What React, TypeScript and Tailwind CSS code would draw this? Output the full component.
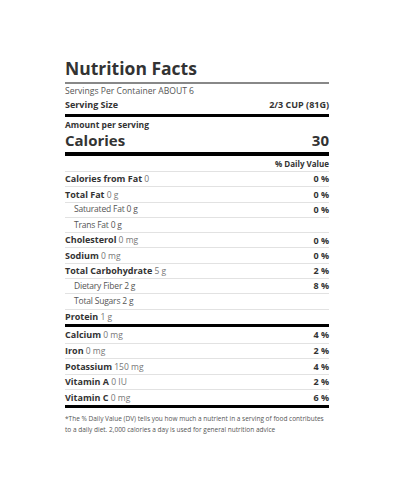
import React from "react";

interface RowProps {
  label: string;
  amount?: string;
  dv?: string;
  sub?: boolean;
  first?: boolean;
  height: string;
}

const Row: React.FC<RowProps> = ({ label, amount, dv, sub, first, height }) => {
  return (
    <div
      className={
        "flex items-center justify-between " +
        height +
        (first ? "" : " border-t border-[#e2e2e2]")
      }
    >
      <p className={sub ? "pl-[9px] text-[8.5px] tracking-[-0.2px] text-[#555]" : "text-[9px] font-bold text-[#333]"}>
        {label}
        {amount && <span className="text-[8.5px] font-normal text-[#777]"> {amount}</span>}
      </p>
      {dv && <p className="text-[9px] font-bold text-[#333]">{dv}</p>}
    </div>
  );
};

const nutrients = [
  { label: "Calories from Fat", amount: "0", dv: "0 %" },
  { label: "Total Fat", amount: "0 g", dv: "0 %" },
  { label: "Saturated Fat 0 g", dv: "0 %", sub: true },
  { label: "Trans Fat 0 g", sub: true },
  { label: "Cholesterol", amount: "0 mg", dv: "0 %" },
  { label: "Sodium", amount: "0 mg", dv: "0 %" },
  { label: "Total Carbohydrate", amount: "5 g", dv: "2 %" },
  { label: "Dietary Fiber 2 g", dv: "8 %", sub: true },
  { label: "Total Sugars 2 g", sub: true },
  { label: "Protein", amount: "1 g" },
];

const minerals = [
  { label: "Calcium", amount: "0 mg", dv: "4 %" },
  { label: "Iron", amount: "0 mg", dv: "2 %" },
  { label: "Potassium", amount: "150 mg", dv: "4 %" },
  { label: "Vitamin A", amount: "0 IU", dv: "2 %" },
  { label: "Vitamin C", amount: "0 mg", dv: "6 %" },
];

export default function App() {
  return (
    <div className="w-[400px] h-[480px] bg-white font-['Open_Sans',sans-serif] text-[#333]">
      <div className="ml-[65px] w-[264px] pt-[55px]">
        <h1 className="flex items-center h-[27px] text-[17.5px] font-bold leading-none text-[#333]">
          Nutrition Facts
        </h1>
        <div className="h-[2px] bg-[#888]"></div>

        <div className="flex items-center h-[15px] text-[8.6px] text-[#555]">
          Servings Per Container ABOUT 6
        </div>
        <div className="flex items-center justify-between h-[12px] mb-[3px] text-[9px] font-bold">
          <span>Serving Size</span>
          <span>2/3 CUP (81G)</span>
        </div>
        <div className="h-[3px] bg-black"></div>

        <div className="flex items-center h-[16px] text-[8.5px] font-bold">
          Amount per serving
        </div>
        <div className="flex items-center justify-between h-[14px] mb-[5px] text-[15px] font-bold leading-none">
          <span>Calories</span>
          <span>30</span>
        </div>
        <div className="h-[4px] bg-black"></div>

        <div className="flex items-center justify-end h-[15px] text-[8px] font-bold">
          % Daily Value
        </div>
        {nutrients.map((n) => (
          <Row key={n.label} {...n} height="h-[15.3px]" />
        ))}
        <div className="h-[3px] bg-black"></div>

        {minerals.map((n, i) => (
          <Row key={n.label} {...n} first={i === 0} height="h-[15.6px]" />
        ))}
        <div className="h-[3px] bg-black"></div>

        <p className="pt-[5px] text-[6.5px] leading-[11px] text-[#555]">
          *The % Daily Value (DV) tells you how much a nutrient in a serving of food contributes
          to a daily diet. 2,000 calories a day is used for general nutrition advice
        </p>
      </div>
    </div>
  );
}
